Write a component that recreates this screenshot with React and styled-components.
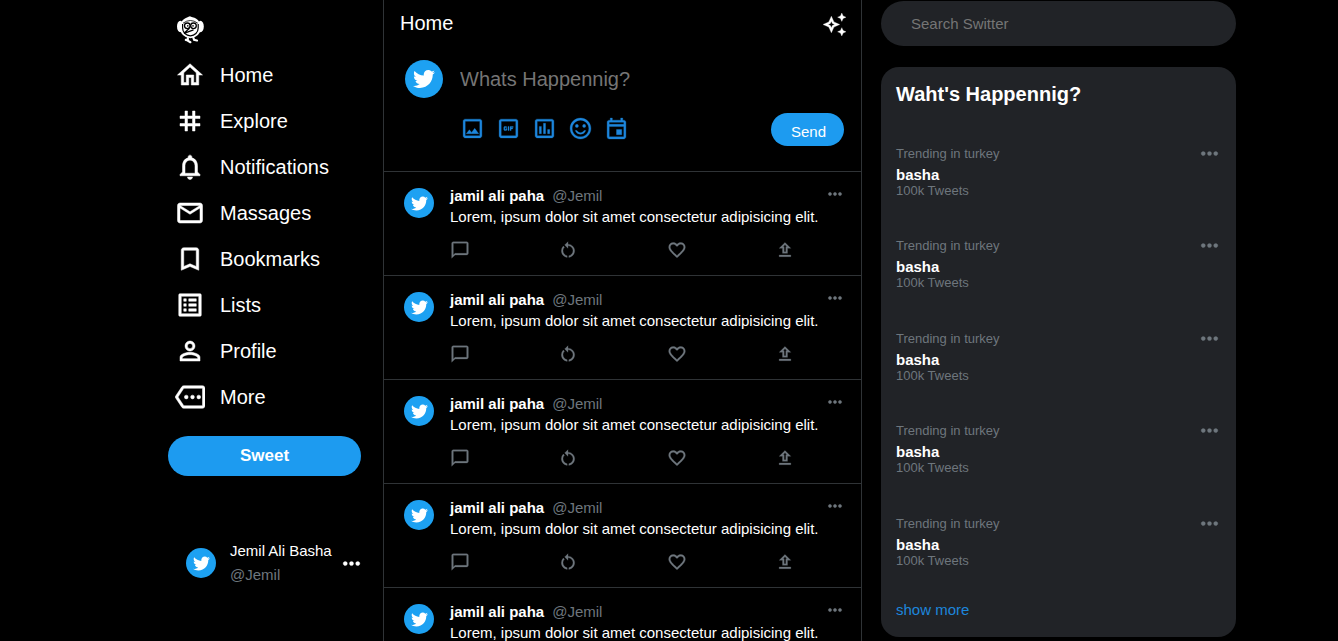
import React from "react";
import styled, { createGlobalStyle } from "styled-components";
import { FaTwitter } from "react-icons/fa";
import {
  MdOutlineHome,
  MdTag,
  MdNotificationsNone,
  MdMailOutline,
  MdBookmarkBorder,
  MdListAlt,
  MdPersonOutline,
  MdOutlineMore,
  MdMoreHoriz,
  MdOutlineAutoAwesome,
  MdOutlineImage,
  MdOutlineGifBox,
  MdOutlinePoll,
  MdOutlineSentimentSatisfiedAlt,
  MdOutlineEvent,
  MdChatBubbleOutline,
  MdRestartAlt,
  MdFavoriteBorder,
  MdOutlineUpload,
} from "react-icons/md";

const GlobalStyle = createGlobalStyle`
  *, *::before, *::after { box-sizing: border-box; }
  body {
    margin: 0;
    background: #000;
    color: #fff;
    font-family: "Liberation Sans", Arial, sans-serif;
    font-size: 15px;
    line-height: 20px;
  }
  h1, h2, p, ul { margin: 0; padding: 0; }
  ul { list-style: none; }
  svg { display: block; }
  svg path[fill="none"] { stroke: none; }
`;

const Page = styled.div`
  display: grid;
  grid-template-columns: 383fr 479fr 476fr;
  height: 100vh;
  overflow: hidden;
`;

const Sidebar = styled.header`
  justify-self: end;
  width: 215px;
  padding: 7px 22px 0 0;
`;

const Logo = styled.a`
  display: flex;
  align-items: center;
  height: 45px;
  padding-left: 7px;
  color: #fff;
`;

const NavLink = styled.a`
  display: flex;
  align-items: center;
  gap: 15px;
  height: 46px;
  padding-left: 7px;
  color: #fff;
  font-size: 20px;
  text-decoration: none;

  svg { stroke-width: 0.4; }
`;

const SweetButton = styled.button`
  display: block;
  width: 100%;
  height: 40px;
  margin-top: 16px;
  border: 0;
  border-radius: 20px;
  background: #1d9bf0;
  color: #fff;
  font: bold 17px/20px "Liberation Sans", Arial, sans-serif;
  cursor: pointer;
`;

const Account = styled.div`
  display: flex;
  align-items: center;
  gap: 14px;
  margin-top: 63px;
  padding-left: 18px;
  margin-right: -3px;
`;

const AccountNames = styled.div`
  display: flex;
  flex: 1;
  flex-direction: column;
  line-height: 24px;
  white-space: nowrap;
`;

const AvatarCircle = styled.span`
  display: flex;
  flex: none;
  align-items: center;
  justify-content: center;
  width: ${(p) => p.$size}px;
  height: ${(p) => p.$size}px;
  border-radius: 50%;
  background: #1da1f2;
  color: #fff;
`;

const IconButton = styled.button`
  flex: none;
  padding: 0;
  border: 0;
  background: none;
  color: ${(p) => p.$color || "#6e767d"};
  cursor: pointer;

  svg { stroke-width: 0.3; }
`;

const AccountMenu = styled(IconButton)`
  margin-left: -10px;
`;

const Muted = styled.span`
  color: #6e767d;
`;

const Feed = styled.main`
  min-width: 0;
  border: solid #2f3336;
  border-width: 0 1px;
`;

const FeedHeader = styled.div`
  display: flex;
  align-items: center;
  justify-content: space-between;
  height: 48px;
  padding: 0 14px 0 16px;
`;

const FeedTitle = styled.h1`
  font-size: 20px;
  line-height: 24px;
  font-weight: 400;
  padding-bottom: 2px;
`;

const Composer = styled.form`
  display: flex;
  gap: 17px;
  height: 124px;
  padding: 12px 17px 0 21px;
  border-bottom: 1px solid #2f3336;
`;

const ComposerBody = styled.div`
  flex: 1;
  min-width: 0;
`;

const ComposerInput = styled.input`
  display: block;
  width: 100%;
  height: 38px;
  padding: 0;
  border: 0;
  outline: 0;
  background: transparent;
  color: #fff;
  font: 20px/24px "Liberation Sans", Arial, sans-serif;
  &::placeholder { color: #757575; }
`;

const ComposerTools = styled.div`
  display: flex;
  align-items: flex-start;
  gap: 11px;
  padding-top: 15px;
`;

const ToolButton = styled(IconButton)`
  padding-top: 3px;
`;

const SendButton = styled.button`
  height: 33px;
  margin-left: auto;
  padding: 4px 18px 0 20px;
  border: 0;
  border-radius: 17px;
  background: #1d9bf0;
  color: #fff;
  font: 15px/20px "Liberation Sans", Arial, sans-serif;
  cursor: pointer;
`;

const TweetRow = styled.article`
  display: flex;
  gap: 16px;
  height: 104px;
  padding: 16px 16px 0 20px;
  border-bottom: 1px solid #2f3336;
`;

const TweetBody = styled.div`
  flex: 1;
  min-width: 0;
`;

const TweetTop = styled.div`
  display: flex;
  gap: 8px;
  line-height: 16px;
`;

const TweetMenu = styled(IconButton)`
  height: 12px;
  margin-left: auto;

  svg { margin-top: -4px; }
`;

const TweetText = styled.p`
  line-height: 17px;
  padding-top: 4px;
`;

const TweetActions = styled.div`
  display: flex;
  justify-content: space-between;
  padding: 15px 50px 0 0;
`;

const Aside = styled.aside`
  width: 355px;
  margin-left: 19px;
  padding-top: 1px;
`;

const SearchInput = styled.input`
  display: block;
  width: 100%;
  height: 45px;
  padding: 0 30px;
  border: 0;
  border-radius: 23px;
  outline: 0;
  background: #212327;
  color: #fff;
  font: 15px/20px "Liberation Sans", Arial, sans-serif;
  &::placeholder { color: #757575; }
`;

const TrendsCard = styled.section`
  margin-top: 21px;
  padding: 15px 14px 17px 15px;
  border-radius: 18px;
  background: #212327;
`;

const TrendsTitle = styled.h2`
  font-size: 20px;
  line-height: 24px;
`;

const TrendList = styled.ul`
  display: grid;
  grid-auto-rows: 1fr;
  height: 462px;
  margin-top: 32px;
`;

const TrendItem = styled.li`
  display: flex;
  align-items: flex-start;
  justify-content: space-between;
  padding-top: 3px;
`;

const TrendInfo = styled.div`
  display: flex;
  flex-direction: column;
  padding-top: 5px;
  line-height: 16px;
`;

const TrendMeta = styled(Muted)`
  font-size: 13px;
`;

const TrendName = styled.strong`
  padding-top: 5px;
`;

const MoreLink = styled.a`
  display: block;
  color: #1d86dc;
  text-decoration: none;
`;

const NAV = [
  ["Home", MdOutlineHome],
  ["Explore", MdTag],
  ["Notifications", MdNotificationsNone],
  ["Massages", MdMailOutline],
  ["Bookmarks", MdBookmarkBorder],
  ["Lists", MdListAlt],
  ["Profile", MdPersonOutline],
  ["More", MdOutlineMore],
];

const TOOLS = [
  ["Add image", MdOutlineImage],
  ["Add GIF", MdOutlineGifBox],
  ["Add poll", MdOutlinePoll],
  ["Add emoji", MdOutlineSentimentSatisfiedAlt],
  ["Schedule", MdOutlineEvent],
];

const ACTIONS = [
  ["Reply", MdChatBubbleOutline],
  ["Repost", MdRestartAlt],
  ["Like", MdFavoriteBorder],
  ["Share", MdOutlineUpload],
];

const TWEETS = Array.from({ length: 5 }, (_, id) => ({
  id,
  name: "jamil ali paha",
  handle: "@Jemil",
  text: "Lorem, ipsum dolor sit amet consectetur adipisicing elit.",
}));

const TRENDS = Array.from({ length: 5 }, (_, id) => ({
  id,
  place: "Trending in turkey",
  name: "basha",
  count: "100k Tweets",
}));

function BirdLogo() {
  return (
    <svg width="30" height="30" viewBox="0 0 30 30" fill="none" aria-hidden="true">
      <path d="M11 4.5Q15-2 18.5 4.5" fill="currentColor" />
      <ellipse cx="5.3" cy="11.5" rx="3.3" ry="5.8" fill="currentColor" />
      <ellipse cx="25.5" cy="11.5" rx="3.3" ry="5.8" fill="currentColor" />
      <circle cx="15.4" cy="12.6" r="10.6" fill="currentColor" />
      <path d="M7.6 9v4a7.8 7.8 0 0 0 15.6 0V9" stroke="#000" strokeWidth="1.2" />
      <path d="M8 8.2q7.4-5.400 14.800 0" stroke="#000" strokeWidth=".8" />
      <circle cx="12.3" cy="10.800" r="2.800" stroke="#000" strokeWidth="1.300" />
      <circle cx="18.500" cy="10.800" r="2.800" stroke="#000" strokeWidth="1.300" />
      <circle cx="12.800" cy="10.900" r=".8" fill="#000" />
      <circle cx="18" cy="10.900" r=".8" fill="#000" />
      <path d="M14.500 13.300 9 18.300 18.500 14.800" stroke="#000" strokeWidth="1.300" />
      <path d="M12.800 23v2.600l2.600 1.600M18.300 22.500l.8 2.400 2.900.6M10.800 24.900l2.400.6" stroke="currentColor" strokeWidth="2.200" strokeLinecap="round" />
    </svg>
  );
}

function Avatar({ size = 30, bird = 17 }) {
  return (
    <AvatarCircle $size={size}>
      <FaTwitter size={bird} />
    </AvatarCircle>
  );
}

function Tweet({ name, handle, text }) {
  return (
    <TweetRow>
      <Avatar />
      <TweetBody>
        <TweetTop>
          <strong>{name}</strong>
          <Muted>{handle}</Muted>
          <TweetMenu type="button" aria-label="Tweet options">
            <MdMoreHoriz size={20} />
          </TweetMenu>
        </TweetTop>
        <TweetText>{text}</TweetText>
        <TweetActions>
          {ACTIONS.map(([label, Icon]) => (
            <IconButton key={label} type="button" aria-label={label}>
              <Icon size={20} />
            </IconButton>
          ))}
        </TweetActions>
      </TweetBody>
    </TweetRow>
  );
}

export default function App() {
  return (
    <>
      <GlobalStyle />
      <Page>
        <Sidebar>
          <Logo href="#" aria-label="Switter">
            <BirdLogo />
          </Logo>
          <nav>
            {NAV.map(([label, Icon]) => (
              <NavLink key={label} href="#">
                <Icon size={30} />
                {label}
              </NavLink>
            ))}
          </nav>
          <SweetButton type="button">Sweet</SweetButton>
          <Account>
            <Avatar />
            <AccountNames>
              <span>Jemil Ali Basha</span>
              <Muted>@Jemil</Muted>
            </AccountNames>
            <AccountMenu type="button" aria-label="Account menu" $color="#fff">
              <MdMoreHoriz size={25} />
            </AccountMenu>
          </Account>
        </Sidebar>

        <Feed>
          <FeedHeader>
            <FeedTitle>Home</FeedTitle>
            <IconButton type="button" aria-label="Top tweets" $color="#fff">
              <MdOutlineAutoAwesome size={25} />
            </IconButton>
          </FeedHeader>
          <Composer onSubmit={(e) => e.preventDefault()}>
            <Avatar size={38} bird={22} />
            <ComposerBody>
              <ComposerInput aria-label="Whats Happennig?" placeholder="Whats Happennig?" />
              <ComposerTools>
                {TOOLS.map(([label, Icon]) => (
                  <ToolButton key={label} type="button" aria-label={label} $color="#1d86dc">
                    <Icon size={25} />
                  </ToolButton>
                ))}
                <SendButton type="submit">Send</SendButton>
              </ComposerTools>
            </ComposerBody>
          </Composer>
          {TWEETS.map((tweet) => (
            <Tweet key={tweet.id} {...tweet} />
          ))}
        </Feed>

        <Aside>
          <SearchInput type="search" aria-label="Search Switter" placeholder="Search Switter" />
          <TrendsCard>
            <TrendsTitle>Waht's Happennig?</TrendsTitle>
            <TrendList>
              {TRENDS.map((trend) => (
                <TrendItem key={trend.id}>
                  <TrendInfo>
                    <TrendMeta>{trend.place}</TrendMeta>
                    <TrendName>{trend.name}</TrendName>
                    <TrendMeta>{trend.count}</TrendMeta>
                  </TrendInfo>
                  <IconButton type="button" aria-label="Trend options">
                    <MdMoreHoriz size={25} />
                  </IconButton>
                </TrendItem>
              ))}
            </TrendList>
            <MoreLink href="#">show more</MoreLink>
          </TrendsCard>
        </Aside>
      </Page>
    </>
  );
}
